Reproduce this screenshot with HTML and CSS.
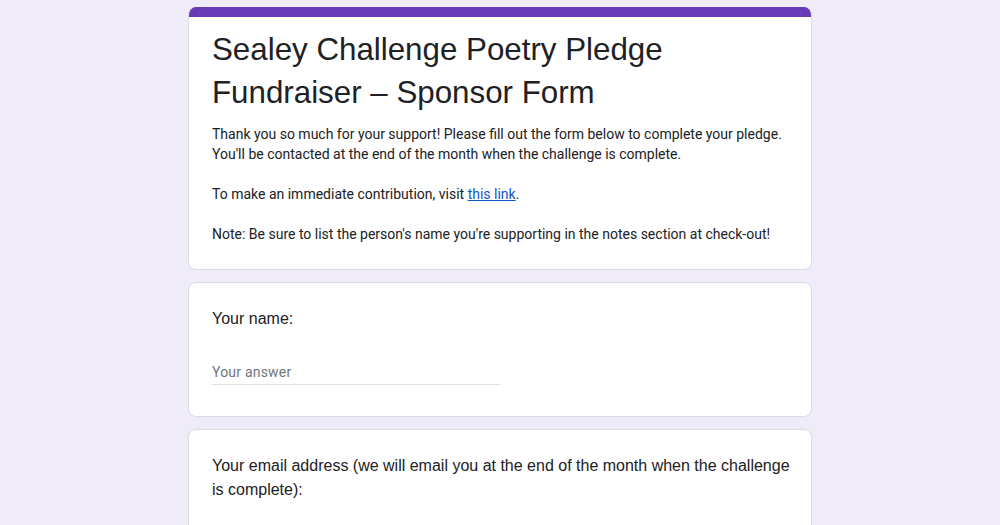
FILE: index.html
```html
<!DOCTYPE html>
<html lang="en">
<head>
<meta charset="utf-8">
<title>Sealey Challenge Poetry Pledge Fundraiser – Sponsor Form</title>
<link rel="stylesheet" href="styles.css">
</head>
<body>
<main class="form">
  <section class="card header-card">
    <div class="accent"></div>
    <div class="header-body">
      <h1 class="title">Sealey Challenge Poetry Pledge Fundraiser – Sponsor Form</h1>
      <div class="desc">
        <p>Thank you so much for your support! Please fill out the form below to complete your pledge. You'll be contacted at the end of the month when the challenge is complete.</p>
        <p>To make an immediate contribution, visit <a href="#" class="link">this link</a>.</p>
        <p>Note: Be sure to list the person's name you're supporting in the notes section at check-out!</p>
      </div>
    </div>
  </section>
  <section class="card question">
    <div class="q-title">Your name:</div>
    <div class="answer">Your answer</div>
  </section>
  <section class="card question">
    <div class="q-title">Your email address (we will email you at the end of the month when the challenge is complete):</div>
    <div class="answer">Your answer</div>
  </section>
</main>
</body>
</html>
```
FILE: styles.css
```css
html, body {
  margin: 0;
  padding: 0;
  background: #f0ebf8;
}
body {
  font-family: Roboto, "Liberation Sans", Arial, sans-serif;
  color: #202124;
}
.form {
  width: 624px;
  margin: 0 auto;
  padding-top: 7px;
  display: flex;
  flex-direction: column;
  gap: 12px;
}
.card {
  background: #fff;
  border: 1px solid #dadce0;
  border-radius: 8px;
  overflow: hidden;
}
.header-card {
  border-top: none;
}
.accent {
  height: 10px;
  background: #673ab7;
}
.header-body {
  padding: 11px 23px 25px;
}
.title {
  margin: 0;
  font-family: "Liberation Sans", Arial, sans-serif;
  font-weight: 400;
  font-size: 31.3px;
  line-height: 43px;
  color: #202124;
  padding-right: 100px;
}
.desc {
  margin-top: 10px;
  font-size: 14px;
  line-height: 20px;
  letter-spacing: 0;
}
.desc p {
  margin: 0 0 20px;
}
.desc p:last-child {
  margin-bottom: 0;
}
.link {
  color: #1155cc;
  text-decoration: underline;
}
.question {
  padding: 24px 14px 31px 23px;
}
.q-title {
  font-family: "Liberation Sans", Arial, sans-serif;
  font-size: 16px;
  line-height: 24px;
  color: #202124;
}
.answer {
  margin-top: 31px;
  width: 288px;
  font-size: 14px;
  letter-spacing: 0.2px;
  color: #70757a;
  padding-bottom: 2px;
  border-bottom: 1px solid #e0e0e0;
  line-height: 20px;
}
```
